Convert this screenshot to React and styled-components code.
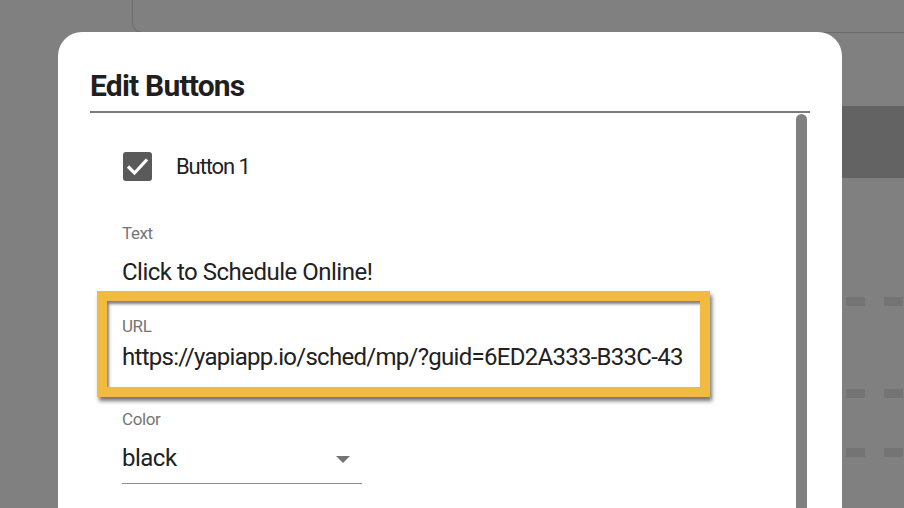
import React from 'react'
import styled, { createGlobalStyle } from 'styled-components'

const GlobalStyle = createGlobalStyle`
  html, body {
    margin: 0;
    padding: 0;
    background: #808080;
  }
  body {
    font-family: Roboto, "Noto Sans", "Liberation Sans", sans-serif;
    color: #212121;
  }
`

const Backdrop = styled.div`
  position: relative;
  width: 904px;
  height: 508px;
  overflow: hidden;
  background: #808080;
`

const BackPage = styled.div`
  display: grid;
  grid-template-columns: 132px 1fr;
  height: 100%;
`

const BackColumn = styled.div`
  display: flex;
  flex-direction: column;
`

const BackCard = styled.div`
  height: 32px;
  border-left: 1px solid #6c6c6c;
  border-bottom: 1px solid #6c6c6c;
  border-bottom-left-radius: 10px;
`

const BackBand = styled.div`
  margin-top: 73px;
  height: 72px;
  background: #636363;
`

const DashRow = styled.div`
  display: flex;
  gap: 19px;
  margin-top: ${p => p.$top}px;
  padding-left: 714px;
  height: 9px;
`

const Dash = styled.span`
  flex: 0 0 19px;
  background: #747474;
`

const Modal = styled.div`
  position: absolute;
  top: 32px;
  left: 58px;
  width: 784px;
  height: 520px;
  background: #fff;
  border-radius: 24px;
  padding: 0 32px;
  box-sizing: border-box;
  display: flex;
  flex-direction: column;
`

const Title = styled.h2`
  margin: 0;
  padding-top: 37px;
  padding-bottom: 8px;
  font-size: 30px;
  line-height: 34px;
  font-weight: 700;
  letter-spacing: -0.8px;
  color: #1f1f1f;
  border-bottom: 2px solid #7a7a7a;
`

const Body = styled.div`
  flex: 1;
  display: flex;
  min-height: 0;
`

const Content = styled.div`
  flex: 1;
  padding: 39px 0 0 32px;
  display: flex;
  flex-direction: column;
`

const Scrollbar = styled.div`
  flex: 0 0 11px;
  margin: 1px 3px 0 0;
  background: #808080;
  border-radius: 6px 6px 0 0;
`

const CheckRow = styled.label`
  display: flex;
  align-items: center;
  gap: 24px;
  padding-left: 1px;
`

const CheckBox = styled.span`
  width: 29px;
  height: 29px;
  border-radius: 3px;
  background: #5a5a5a;
  display: flex;
  align-items: center;
  justify-content: center;
`

const CheckText = styled.span`
  font-size: 22px;
  line-height: 28px;
  letter-spacing: -1.1px;
  color: #222;
`

const Field = styled.div`
  display: flex;
  flex-direction: column;
  margin-top: ${p => p.$top || 0}px;
`

const Label = styled.span`
  font-size: 17px;
  line-height: 20px;
  color: #757575;
  letter-spacing: -0.4px;
`

const Value = styled.div`
  margin-top: ${p => p.$gap}px;
  font-size: 24px;
  line-height: 28px;
  letter-spacing: ${p => p.$spacing ?? -0.5}px;
  color: #212121;
  white-space: nowrap;
`

const Highlight = styled.div`
  margin: 5px 0 0 -25px;
  width: 613px;
  box-sizing: border-box;
  border: 10px solid #f0bb40;
  background: #fff;
  padding: 15px 15px 16px 15px;
  overflow: hidden;
  box-shadow: 2px 4px 4px rgba(0, 0, 0, 0.55), inset 2px 3px 3px rgba(0, 0, 0, 0.5);
`

const Select = styled.div`
  margin-top: 15px;
  width: 240px;
  height: 40px;
  box-sizing: border-box;
  border-bottom: 1px solid #8c8c8c;
  display: flex;
  justify-content: space-between;
  padding-right: 12px;
`

const SelectValue = styled.span`
  font-size: 24px;
  line-height: 28px;
  letter-spacing: -0.5px;
`

const Caret = styled.span`
  align-self: flex-start;
  margin-top: 12px;
  width: 0;
  height: 0;
  border-left: 7px solid transparent;
  border-right: 7px solid transparent;
  border-top: 7px solid #757575;
`

export default function App() {
  return (
    <>
      <GlobalStyle />
      <Backdrop>
        <BackPage>
          <div />
          <BackColumn>
            <BackCard />
            <BackBand />
            <DashRow $top={119}><Dash /><Dash /><Dash /></DashRow>
            <DashRow $top={83}><Dash /><Dash /><Dash /></DashRow>
            <DashRow $top={50}><Dash /><Dash /><Dash /></DashRow>
          </BackColumn>
        </BackPage>

        <Modal>
          <Title>Edit Buttons</Title>
          <Body>
            <Content>
              <CheckRow>
                <CheckBox>
                  <svg width="29" height="29" viewBox="0 0 29 29">
                    <polyline points="5,14.5 11.5,21 24,7.5" fill="none" stroke="#fff" strokeWidth="3.2" />
                  </svg>
                </CheckBox>
                <CheckText>Button 1</CheckText>
              </CheckRow>

              <Field $top={42}>
                <Label>Text</Label>
                <Value $gap={15}>Click to Schedule Online!</Value>
              </Field>

              <Highlight>
                <Field>
                  <Label>URL</Label>
                  <Value $gap={7} $spacing={-0.72}>https://yapiapp.io/sched/mp/?guid=6ED2A333-B33C-43</Value>
                </Field>
              </Highlight>

              <Field $top={12}>
                <Label>Color</Label>
                <Select>
                  <SelectValue>black</SelectValue>
                  <Caret />
                </Select>
              </Field>
            </Content>
            <Scrollbar />
          </Body>
        </Modal>
      </Backdrop>
    </>
  )
}
